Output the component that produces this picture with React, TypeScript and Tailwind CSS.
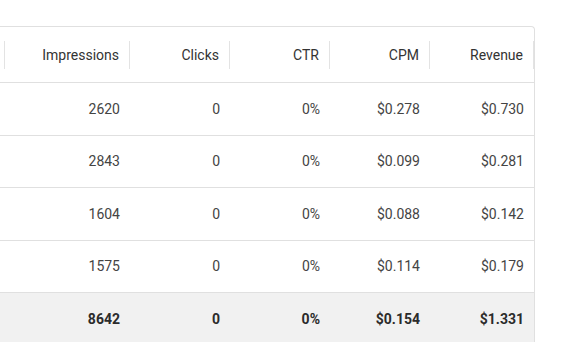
import React from 'react';

interface Column {
    key: string;
    label: string;
    width: string;
}

const COLUMNS: Column[] = [
    { key: 'impressions', label: 'Impressions', width: 'w-[125px]' },
    { key: 'clicks', label: 'Clicks', width: 'w-[100px]' },
    { key: 'ctr', label: 'CTR', width: 'w-[100px]' },
    { key: 'cpm', label: 'CPM', width: 'w-[100px]' },
    { key: 'revenue', label: 'Revenue', width: 'w-[104px]' },
];

type Row = Record<string, string>;

const ROWS: Row[] = [
    { impressions: '2620', clicks: '0', ctr: '0%', cpm: '$0.278', revenue: '$0.730' },
    { impressions: '2843', clicks: '0', ctr: '0%', cpm: '$0.099', revenue: '$0.281' },
    { impressions: '1604', clicks: '0', ctr: '0%', cpm: '$0.088', revenue: '$0.142' },
    { impressions: '1575', clicks: '0', ctr: '0%', cpm: '$0.114', revenue: '$0.179' },
];

const TOTALS: Row = { impressions: '8642', clicks: '0', ctr: '0%', cpm: '$0.154', revenue: '$1.331' };

const Separator = () => (
    <div className="h-[28px] w-px bg-[#e3e3e3] shrink-0" />
);

const DataRow: React.FC<{ row: Row; total?: boolean }> = ({ row, total }) => (
    <div
        className={`flex h-[52.5px] border-b border-[#e0e0e0] ${
            total ? 'bg-[#f1f1f1] font-bold text-[#2b2b2b]' : 'text-[#444]'
        }`}
    >
        <div className="w-[5px] shrink-0" />
        {COLUMNS.map((col) => (
            <div
                key={col.key}
                className={`${col.width} shrink-0 flex items-center justify-end pr-[10px]`}
            >
                {row[col.key]}
            </div>
        ))}
    </div>
);

export default function App() {
    return (
        <div
            className="w-[568px] h-[342px] overflow-hidden bg-white text-[14px] leading-none"
            style={{ fontFamily: 'Roboto, "Liberation Sans", sans-serif' }}
        >
            <div className="mt-[26px] w-[535px] border-t border-r border-[#e0e0e0] rounded-tr-[4px]">
                {/* header */}
                <div className="flex h-[56px] border-b border-[#e0e0e0] text-[#333] font-normal">
                    <div className="w-[5px] shrink-0 flex items-center justify-end">
                        <Separator />
                    </div>
                    {COLUMNS.map((col) => (
                        <div
                            key={col.key}
                            className={`${col.width} shrink-0 flex items-center justify-end`}
                        >
                            <span className="pr-[10px]">{col.label}</span>
                            <Separator />
                        </div>
                    ))}
                </div>
                {ROWS.map((row, i) => (
                    <DataRow key={i} row={row} />
                ))}
                <DataRow row={TOTALS} total />
            </div>
        </div>
    );
}
